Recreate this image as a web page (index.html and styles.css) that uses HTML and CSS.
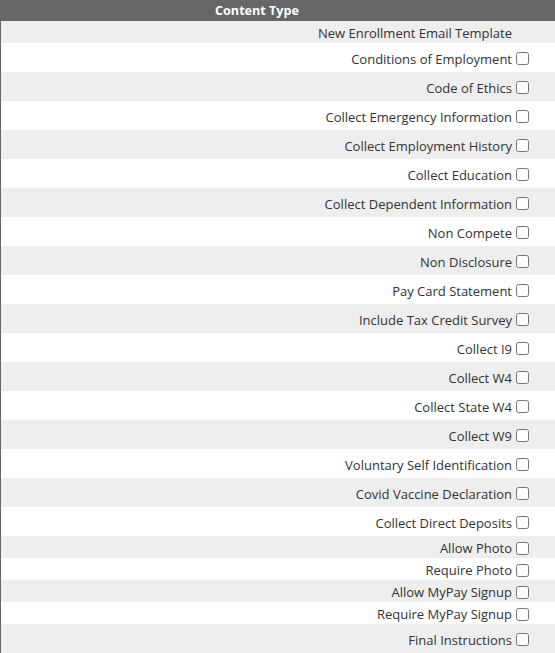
FILE: index.html
```html
<!DOCTYPE html>
<html>
<head>
<meta charset="utf-8">
<link rel="stylesheet" href="styles.css">
</head>
<body>
<div class="panel">
  <div class="head"><span class="head-title">Content Type</span></div>
  <div class="row short alt no-box"><span class="label">New Enrollment Email Template</span></div>
  <div class="row"><label class="label">Conditions of Employment</label><input type="checkbox"></div>
  <div class="row alt"><label class="label">Code of Ethics</label><input type="checkbox"></div>
  <div class="row"><label class="label">Collect Emergency Information</label><input type="checkbox"></div>
  <div class="row alt"><label class="label">Collect Employment History</label><input type="checkbox"></div>
  <div class="row"><label class="label">Collect Education</label><input type="checkbox"></div>
  <div class="row alt"><label class="label">Collect Dependent Information</label><input type="checkbox"></div>
  <div class="row"><label class="label">Non Compete</label><input type="checkbox"></div>
  <div class="row alt"><label class="label">Non Disclosure</label><input type="checkbox"></div>
  <div class="row"><label class="label">Pay Card Statement</label><input type="checkbox"></div>
  <div class="row alt"><label class="label">Include Tax Credit Survey</label><input type="checkbox"></div>
  <div class="row"><label class="label">Collect I9</label><input type="checkbox"></div>
  <div class="row alt"><label class="label">Collect W4</label><input type="checkbox"></div>
  <div class="row"><label class="label">Collect State W4</label><input type="checkbox"></div>
  <div class="row alt"><label class="label">Collect W9</label><input type="checkbox"></div>
  <div class="row"><label class="label">Voluntary Self Identification</label><input type="checkbox"></div>
  <div class="row alt"><label class="label">Covid Vaccine Declaration</label><input type="checkbox"></div>
  <div class="row"><label class="label">Collect Direct Deposits</label><input type="checkbox"></div>
  <div class="row short alt"><label class="label">Allow Photo</label><input type="checkbox"></div>
  <div class="row short"><label class="label">Require Photo</label><input type="checkbox"></div>
  <div class="row short alt"><label class="label">Allow MyPay Signup</label><input type="checkbox"></div>
  <div class="row short"><label class="label">Require MyPay Signup</label><input type="checkbox"></div>
  <div class="row alt"><label class="label">Final Instructions</label><input type="checkbox"></div>
</div>
</body>
</html>
```

FILE: styles.css
```css
html, body {
  margin: 0;
  padding: 0;
  background: #ffffff;
}
body {
  font-family: "Open Sans", "Liberation Sans", sans-serif;
  font-size: 13px;
  color: #333333;
}
.panel {
  width: 555px;
  border-left: 1px solid #666666;
  box-sizing: border-box;
}
.head {
  height: 21px;
  background: #666666;
  display: flex;
  align-items: center;
  justify-content: center;
  padding-right: 41px;
  margin-left: -1px;
}
.head-title {
  color: #ffffff;
  font-weight: bold;
  font-size: 12.6px;
}
.row {
  height: 29px;
  box-sizing: border-box;
  padding-top: 2px;
  display: flex;
  align-items: center;
  justify-content: flex-end;
  padding-right: 26px;
  background: #ffffff;
}
.row.short {
  height: 22px;
}
.row.alt {
  background: #eeeeee;
}
.row.no-box {
  padding-right: 43px;
}
.label {
  white-space: nowrap;
}
.row input[type="checkbox"] {
  width: 13px;
  height: 13px;
  margin: 0 0 0 4px;
}
```
